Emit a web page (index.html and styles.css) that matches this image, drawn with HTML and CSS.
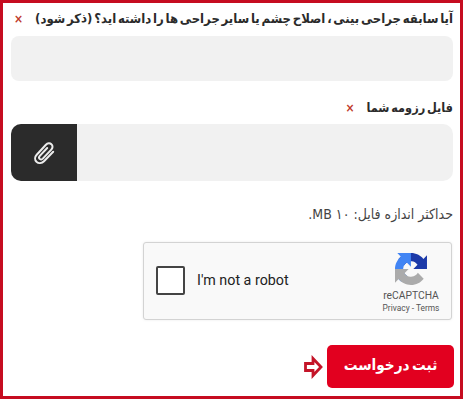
FILE: index.html
```html
<!DOCTYPE html>
<html lang="fa" dir="rtl">
<head>
  <meta charset="UTF-8" />
  <meta name="viewport" content="width=device-width, initial-scale=1.0"/>
  <title>ثبت درخواست</title>
  <link rel="stylesheet" href="styles.css">
</head>
<body>

<form class="wrapper">
  <label class="label" for="surgery"><span class="label-text">آیا سابقه جراحی بینی ، اصلاح چشم یا سایر جراحی ها را داشته اید؟ (ذکر شود)</span><span class="required">×</span></label>
  <input class="field" id="surgery" type="text">

  <div class="label second"><span class="label-text">فایل رزومه شما</span><span class="required">×</span></div>
  <div class="file">
    <button class="attach" type="button" aria-label="فایل">
      <svg width="22" height="24" viewBox="0 0 22 24" fill="none" stroke="#ececec" stroke-width="2" stroke-linecap="round" stroke-linejoin="round">
        <path d="M20.200 10.800L11 20.200c-2.200 2.200-5.400 2.600-7.500.6-2-2-1.800-5 .2-7.100l9.200-10c1.600-1.600 4-1.900 5.500-.4 1.600 1.500 1.400 3.700-.1 5.300l-8.500 9c-1 1-2.400 1.100-3.200.3-.8-.8-.7-2 .2-3L14.200 7"/>
      </svg>
    </button>
  </div>
  <p class="hint">حداکثر اندازه فایل: ۱۰ MB.</p>

  <div class="captcha" dir="ltr">
    <span class="checkbox"></span>
    <span class="captcha-text">I'm not a robot</span>
    <div class="brand">
      <svg width="32" height="32" viewBox="0 0 64 64">
        <path fill="#1c3aa9" d="M64 31.955l-.033-1.37V4.687l-7.16 7.16C50.948 4.674 42.033.093 32.05.093c-10.4 0-19.622 4.96-25.458 12.64l11.736 11.86a15.55 15.55 0 0 1 4.754-5.334c2.05-1.6 4.952-2.906 8.968-2.906.485 0 .86.057 1.135.163 4.976.393 9.288 3.14 11.828 7.124l-8.307 8.307L64 31.953"/>
        <path fill="#4285f4" d="M31.862.094l-1.37.033H4.594l7.16 7.16C4.58 13.147 0 22.06 0 32.046c0 10.4 4.96 19.622 12.64 25.458L24.5 45.768a15.55 15.55 0 0 1-5.334-4.754c-1.6-2.05-2.906-4.952-2.906-8.968 0-.485.057-.86.163-1.135.393-4.976 3.14-9.288 7.124-11.828l8.307 8.307L31.86.095"/>
        <path fill="#ababab" d="M.001 32.045l.033 1.37v25.898l7.16-7.16c5.86 7.173 14.774 11.754 24.76 11.754 10.4 0 19.622-4.96 25.458-12.64l-11.736-11.86a15.55 15.55 0 0 1-4.754 5.334c-2.05 1.6-4.952 2.906-8.968 2.906-.485 0-.86-.057-1.135-.163-4.976-.393-9.288-3.14-11.828-7.124l8.307-8.307c-10.522.04-22.4.066-27.295-.005"/>
      </svg>
      <span class="brand-name">reCAPTCHA</span>
      <span class="brand-links">Privacy - Terms</span>
    </div>
  </div>

  <div class="actions">
    <button class="submit" type="submit">ثبت درخواست</button>
    <svg class="arrow" width="19" height="24" viewBox="0 0 19 24">
      <path d="M1.500 8.500H9V3.500L17 12L9 20.500V15.500H1.500Z" fill="#fff" stroke="#c41428" stroke-width="2.800"/>
    </svg>
  </div>
</form>

</body>
</html>
```

FILE: styles.css
```css
* {
  box-sizing: border-box;
}
body {
  margin: 0;
  background: #fff;
  color: #2b2b2b;
  font-family: "DejaVu Sans Condensed", "DejaVu Sans", sans-serif;
}
.wrapper {
  width: 463px;
  height: 399px;
  margin-right: 1px;
  border: 3px solid #c60c20;
  padding: 4px 7px 0 8px;
  overflow: hidden;
}
.label {
  display: flex;
  align-items: center;
  height: 23px;
  font-size: 13px;
  font-weight: bold;
  word-spacing: -2.3px;
  white-space: nowrap;
}
.label-text {
  flex: none;
}
.required {
  margin-right: 12px;
  color: #bf3a2b;
  font-size: 12px;
}
.field {
  display: block;
  width: 100%;
  height: 45px;
  margin-top: 6px;
  border: 0;
  border-radius: 8px;
  background: #f1f1f1;
}
.second {
  margin-top: 15px;
  font-size: 12.6px;
  word-spacing: -2.2px;
}
.file {
  display: flex;
  justify-content: flex-end;
  height: 57px;
  margin-top: 5px;
  border-radius: 10px;
  background: #f1f1f1;
  overflow: hidden;
}
.attach {
  display: flex;
  align-items: center;
  justify-content: center;
  width: 66px;
  padding: 0;
  border: 0;
  background: #2b2b2b;
}
.hint {
  height: 24px;
  margin: 21px 0 0;
  line-height: 24px;
  font-size: 14px;
  color: #444;
  white-space: nowrap;
}
.captcha {
  display: flex;
  align-items: center;
  width: 309px;
  height: 78px;
  margin: 16px 1px 0 auto;
  padding-left: 12px;
  border: 1px solid #d3d3d3;
  border-radius: 3px;
  background: #f9f9f9;
  box-shadow: 0 0 3px rgba(0, 0, 0, 0.08);
  font-family: Roboto, sans-serif;
}
.checkbox {
  width: 29px;
  height: 29px;
  margin-top: -2px;
  border: 2px solid #444;
  border-radius: 2px;
  background: #fff;
}
.captcha-text {
  margin: -2px 0 0 12px;
  font-size: 14.3px;
  color: #222;
}
.brand {
  display: flex;
  flex-direction: column;
  align-items: center;
  margin-left: auto;
  padding-top: 5px;
  width: 80px;
  color: #555;
}
.brand-name {
  margin-top: 4px;
  font-size: 10.3px;
  line-height: 14px;
}
.brand-links {
  font-size: 8.4px;
  line-height: 11px;
}
.actions {
  display: flex;
  align-items: center;
  margin: 25px -1px 0 0;
}
.submit {
  width: 127px;
  height: 43px;
  padding: 0 0 4px;
  border: 0;
  border-radius: 5px;
  background: #e2001f;
  color: #fff;
  font-family: inherit;
  font-size: 15.2px;
  font-weight: bold;
  word-spacing: -2.2px;
}
.arrow {
  margin-right: 4px;
}
```
